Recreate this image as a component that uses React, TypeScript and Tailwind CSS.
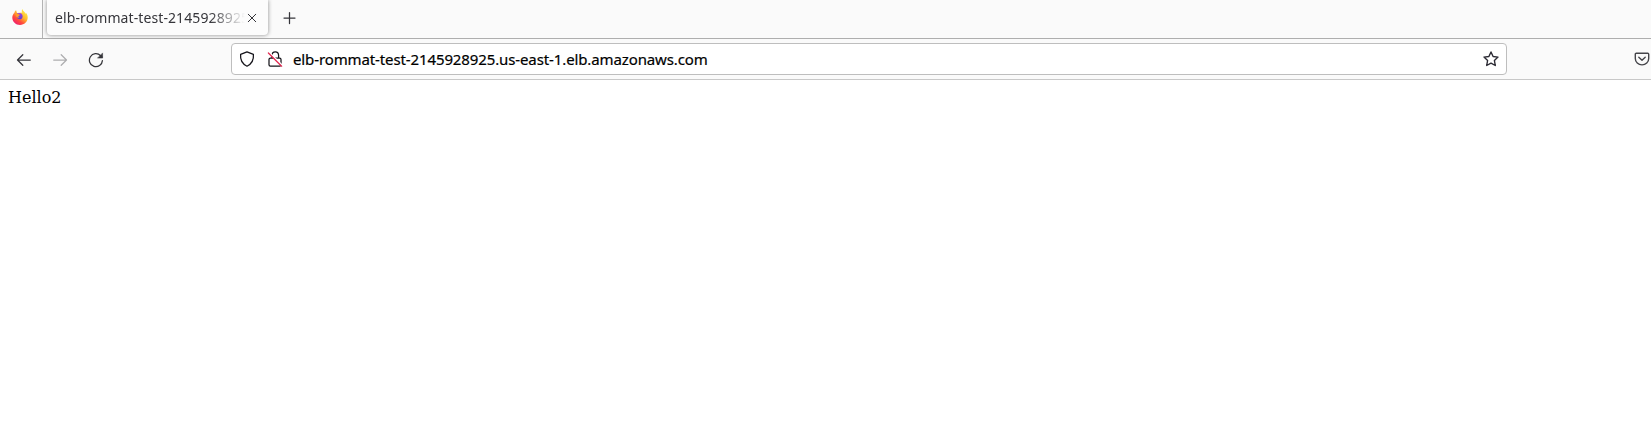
import type { ReactNode } from "react";

function Icon({ className, size = 16, children }: { className: string; size?: number; children: ReactNode }) {
  return (
    <svg
      className={"shrink-0 " + className}
      width={size}
      height={size}
      viewBox="0 0 16 16"
      fill="none"
      stroke="currentColor"
      strokeWidth="1.25"
      strokeLinecap="round"
      strokeLinejoin="round"
    >
      {children}
    </svg>
  );
}

function Firefox() {
  return (
    <svg className="mt-px h-4 w-4 shrink-0" viewBox="0 0 16 16">
      <defs>
        <linearGradient id="flame" x1="0.85" y1="0.1" x2="0.2" y2="0.95">
          <stop offset="0" stopColor="#fff04a" />
          <stop offset="0.4" stopColor="#ffb52c" />
          <stop offset="0.7" stopColor="#ff4a3d" />
          <stop offset="1" stopColor="#ef1d70" />
        </linearGradient>
        <linearGradient id="globe" x1="0.5" y1="0" x2="0.4" y2="1">
          <stop offset="0" stopColor="#a044e8" />
          <stop offset="1" stopColor="#5b3fc9" />
        </linearGradient>
      </defs>
      <path
        d="M10.4 0C9.6 1.4 9.5 2.6 10.4 3.6L5 4 4.1 1.3C3 2 2.6 2.9 2.4 3.9C1.5 4.4 0.3 6.2 0.3 8.5C0.3 12.7 3.7 16 8 16C12.3 16 15.7 12.8 15.7 8.6C15.7 6.5 15 4.8 13.9 3.8L14 5C13 3 10.8 2.2 10.4 0Z"
        fill="url(#flame)"
      />
      <path d="M5 4.6C6.2 3.6 8.6 3.6 9.8 4.9C11.1 6.5 10.9 8.9 9.3 9.9C7.5 10.9 5.4 10 4.8 8.3C5 7.8 6 7.4 7.2 7.1C7.6 6.5 7 6.1 5.9 5.8Z" fill="url(#globe)" />
      <path d="M2.7 4.1C3.7 3.7 4.8 4.1 5.5 5C6.3 5.1 7.5 5.2 7.9 5.7C7.8 6.5 6.6 6.6 6.2 7.2C6.1 7.9 6.6 8.3 7.5 8.5C5.8 9.3 4.5 8.3 4.2 7.1Z" fill="#ff9b29" />
    </svg>
  );
}

function TabStrip() {
  return (
    <div className="flex h-[39px] border-b border-[#aeaeae]">
      <div className="flex w-[43px] items-start border-r border-[#b4b4b4] pt-[8px] pl-[12px]">
        <Firefox />
      </div>
      <div className="ml-1 flex h-[35px] w-[221px] items-center rounded-b-[4px] bg-[#fcfcfc] pl-2 shadow-[0_0_4px_rgba(0,0,0,0.45)]">
        <div className="-mt-0.5 w-[190px] whitespace-nowrap [mask-image:linear-gradient(to_right,black_155px,transparent_190px)]">
          <span className="font-['Noto_Sans','Open_Sans',sans-serif] text-[14px] tracking-[0.1px] text-[#35353a]">
            elb-rommat-test-2145928925
          </span>
        </div>
        <Icon className="ml-[2px] text-[#35353a]" size={10}>
          <path d="M2 2 14 14M14 2 2 14" strokeWidth="1.6" />
        </Icon>
      </div>
      <Icon className="mt-[10px] ml-[13px] text-[#35353a]">
        <path d="M8.5 2.5V13.5M3 8H14" />
      </Icon>
    </div>
  );
}

function Toolbar() {
  return (
    <div className="flex h-[41px] items-center border-b border-[#c8c8c8]">
      <Icon className="mt-px ml-4 text-[#35353a]">
        <path d="M14.3 8H1.8M6.8 2.7 1.5 8 6.8 13.3" />
      </Icon>
      <Icon className="mt-px ml-5 text-[#adadaf]">
        <path d="M1.7 8H14.2M9.2 2.7 14.5 8 9.2 13.3" />
      </Icon>
      <Icon className="mt-px ml-5 text-[#35353a]">
        <path d="M14.4 8.6A6.5 6.5 0 1 1 12.6 3.7L14 5" />
        <path d="M14.6 1.3V6.1H9.8Z" fill="currentColor" strokeWidth="0.5" />
      </Icon>
      <div className="ml-[127px] flex h-8 w-[1276px] items-center rounded border border-[#bebebe] bg-white">
        <Icon className="ml-[7px] text-[#15141a]">
          <path d="M8 .9 14.4 3.3C14.9 8.6 12.6 13 8 15.2C3.4 13 1.1 8.6 1.6 3.3Z" />
        </Icon>
        <Icon className="ml-3 text-[#15141a]">
          <path d="M5 7V4.6C5 -.3 11.6 -.3 11.6 4.6V7M3.4 7H12.6Q14 7 14 8.4V13.8Q14 15.2 12.6 15.2H3.4Q2 15.2 2 13.8V8.4Q2 7 3.4 7Z" />
          <path d="M2.4 1.6 15.2 14.4" stroke="white" strokeWidth="1.6" />
          <path d="M1.4 2 14.6 15.2" stroke="#e22850" />
        </Icon>
        <span className="ml-[10px] font-['Noto_Sans','Open_Sans',sans-serif] text-[15px] tracking-[-0.115px] whitespace-nowrap text-black [-webkit-text-stroke:0.2px_black]">
          elb-rommat-test-2145928925.us-east-1.elb.amazonaws.com
        </span>
        <Icon className="mr-[7px] ml-auto text-[#2b2a33]">
          <path d="M8 1 10.1 5.5 15 6.1 11.4 9.5 12.3 14.5 8 12.1 3.7 14.5 4.6 9.5 1 6.1 5.9 5.5Z" strokeWidth="1.4" />
        </Icon>
      </div>
      <Icon className="ml-[127px] text-[#45454a]">
        <path d="M2.2 2.3H13.8Q14.7 2.3 14.7 3.2V7.4A6.7 6.5 0 0 1 1.3 7.4V3.2Q1.3 2.3 2.2 2.3ZM4.8 6.2 8 9.2 11.2 6.2" strokeWidth="1.4" />
      </Icon>
    </div>
  );
}

export default function App() {
  return (
    <div className="h-[448px] w-[1651px] overflow-hidden bg-white">
      <header className="bg-[#fafafa]">
        <TabStrip />
        <Toolbar />
      </header>
      <main className="p-2 font-['DejaVu_Serif',serif] text-[16px] leading-[19px] text-black">Hello2</main>
    </div>
  );
}
